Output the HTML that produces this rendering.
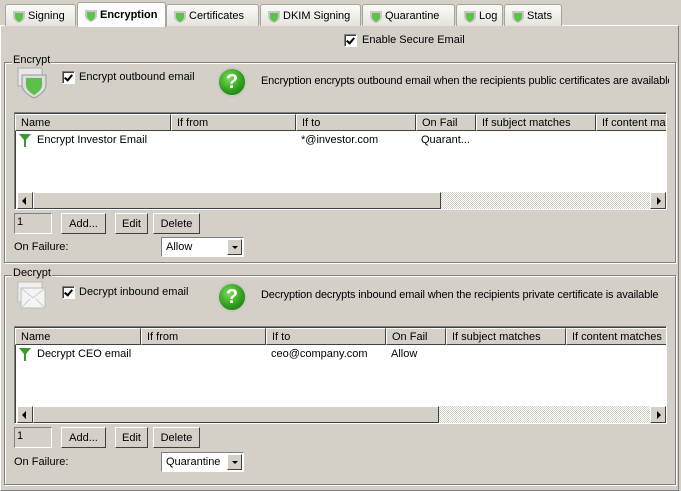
<!DOCTYPE html><html><head><style>
*{box-sizing:border-box;margin:0;padding:0}
body{width:681px;height:491px;background:#d4d0c8;font:11px "Liberation Sans",sans-serif;color:#000;position:relative;overflow:hidden}
.a{position:absolute}
.tab{position:absolute;top:4px;height:22px;border:1px solid #a8a49c;border-bottom:none;border-radius:3px 3px 0 0;background:linear-gradient(#fafaf8,#e6e3dc);padding:5px 0 0 22px;white-space:nowrap}
.tab .sh{position:absolute;left:6px;top:5px}
.sel{top:2px;height:25px;background:#fcfcfc;font-weight:bold;z-index:2;padding-top:6px}
.sel .sh{top:6px}
.panel{position:absolute;left:0;top:25px;width:679px;height:466px;border:1px solid #fff;border-right-color:#808080;border-bottom-color:#808080}
.grp{position:absolute;border:1px solid #808080;box-shadow:1px 1px 0 #fff inset,1px 1px 0 #fff}
.gl{position:absolute;background:#d4d0c8;padding:0 1px}
.cb{position:absolute;width:13px;height:13px;background:#fff;border:1px solid #808080;border-right-color:#fff;border-bottom-color:#fff;box-shadow:inset 1px 1px 0 #404040}
.cb:after{content:"";position:absolute;left:3px;top:1px;width:3px;height:6px;border:solid #000;border-width:0 2px 2px 0;transform:rotate(40deg)}
.list{position:absolute;left:14px;width:653px;height:98px;background:#fff;border:1px solid #808080;border-right-color:#fff;border-bottom-color:#fff;box-shadow:inset 1px 1px 0 #404040;overflow:hidden}
.hd{position:absolute;top:1px;height:17px;background:#d4d0c8;border:1px solid #fff;border-right-color:#404040;border-bottom-color:#404040;padding:2px 0 0 5px;white-space:nowrap;overflow:hidden}
.sb{position:absolute;left:2px;top:79px;width:649px;height:17px;background:repeating-conic-gradient(#d4d0c8 0 25%,#fff 0 50%) 0 0/2px 2px}
.btn3{position:absolute;height:17px;background:#d4d0c8;border:1px solid #fff;border-right-color:#404040;border-bottom-color:#404040}
.btn{position:absolute;height:21px;background:#d4d0c8;border:1px solid #fff;border-right-color:#404040;border-bottom-color:#404040;text-align:center;padding-top:4px}
.cnt{position:absolute;width:38px;height:21px;border:1px solid #808080;border-right-color:#fff;border-bottom-color:#fff;padding:2px 0 0 2px}
.sel2{position:absolute;left:161px;width:83px;height:20px;background:#fff;border:1px solid #808080;border-right-color:#fff;border-bottom-color:#fff;padding:3px 0 0 4px}
.sel2 i{position:absolute;right:1px;top:1px;width:15px;height:16px;background:#d4d0c8;border:1px solid #fff;border-right-color:#404040;border-bottom-color:#404040}
.sel2 i:after{content:"";position:absolute;left:4px;top:6px;border:3px solid transparent;border-top:3px solid #000}
.help{position:absolute;width:30px;height:30px;border-radius:50%;background:radial-gradient(circle at 40% 35%,#7fdc5a,#2a9a18 60%,#1d6e10);border:2px solid #c8c8c8;color:#fff;font:bold 20px "Liberation Sans",sans-serif;text-align:center;line-height:26px}
.funnel{position:absolute;left:4px;top:4px}
.clip{position:absolute;overflow:hidden;white-space:nowrap;letter-spacing:-0.15px}
</style></head><body>
<svg width="0" height="0" style="position:absolute"><defs>
<symbol id="sh" viewBox="0 0 14 14"><path d="M1 1h12v6c0 4-6 6-6 6s-6-2-6-6z" fill="#c8c8c8"/><path d="M3 3h8v4c0 3-4 5-4 5s-4-2-4-5z" fill="#5cc24a"/></symbol>
</defs></svg>
<div class="panel"></div>
<div class="tab" style="left:5px;width:71px"><svg class="sh" width="14" height="14"><use href="#sh"/></svg>Signing</div>
<div class="tab sel" style="left:77px;width:89px"><svg class="sh" width="14" height="14"><use href="#sh"/></svg>Encryption</div>
<div class="tab" style="left:166px;width:93px"><svg class="sh" width="14" height="14"><use href="#sh"/></svg>Certificates</div>
<div class="tab" style="left:260px;width:101px"><svg class="sh" width="14" height="14"><use href="#sh"/></svg>DKIM Signing</div>
<div class="tab" style="left:362px;width:93px"><svg class="sh" width="14" height="14"><use href="#sh"/></svg>Quarantine</div>
<div class="tab" style="left:456px;width:47px"><svg class="sh" width="14" height="14"><use href="#sh"/></svg>Log</div>
<div class="tab" style="left:504px;width:58px"><svg class="sh" width="14" height="14"><use href="#sh"/></svg>Stats</div>

<div class="cb" style="left:344px;top:34px"></div><div class="a" style="left:362px;top:34px">Enable Secure Email</div>

<!-- Encrypt -->
<div class="grp" style="left:4px;top:62px;width:672px;height:201px"></div>
<div class="gl" style="left:12px;top:54px">Encrypt</div>
<svg class="a" style="left:17px;top:67px" width="32" height="32"><rect x="1" y="1" width="24" height="18" fill="#e8e8e8" stroke="#aaa"/><path d="M5 8h24v10c0 8-12 13-12 13S5 26 5 18z" fill="#ddd" stroke="#999"/><path d="M9 11h16v7c0 6-8 10-8 10s-8-4-8-10z" fill="#5cbf4c"/></svg>
<div class="cb" style="left:62px;top:71px"></div><div class="a" style="left:79px;top:71px">Encrypt outbound email</div>
<div class="help" style="left:217px;top:67px">?</div>
<div class="clip" style="left:261px;top:75px;width:408px">Encryption encrypts outbound email when the recipients public certificates are available</div>
<div class="list" style="top:112px">
<div class="hd" style="left:0;width:156px">Name</div><div class="hd" style="left:156px;width:125px">If from</div><div class="hd" style="left:281px;width:120px">If to</div><div class="hd" style="left:401px;width:60px">On Fail</div><div class="hd" style="left:461px;width:120px">If subject matches</div><div class="hd" style="left:581px;width:80px">If content matches</div>
<svg class="funnel" style="top:21px" width="12" height="14"><path d="M0 0h12L7 6v7H5V6z" fill="#3a9a30"/></svg>
<div class="a" style="left:22px;top:21px">Encrypt Investor Email</div><div class="a" style="left:286px;top:21px">*@investor.com</div><div class="a" style="left:406px;top:21px">Quarant...</div>
<div class="sb"><div class="btn3" style="left:0;top:0;width:16px"><span style="position:absolute;left:4px;top:4px;border:4px solid transparent;border-right:4px solid #000;border-left:0"></span></div><div class="btn3" style="left:16px;top:0;width:408px"></div><div class="btn3" style="left:633px;top:0;width:16px"><span style="position:absolute;left:6px;top:4px;border:4px solid transparent;border-left:4px solid #000;border-right:0"></span></div></div>
</div>
<div class="cnt" style="left:14px;top:213px">1</div>
<div class="btn" style="left:61px;top:213px;width:45px">Add...</div>
<div class="btn" style="left:115px;top:213px;width:33px">Edit</div>
<div class="btn" style="left:153px;top:213px;width:47px">Delete</div>
<div class="a" style="left:14px;top:241px">On Failure:</div>
<div class="sel2" style="top:237px">Allow<i></i></div>

<!-- Decrypt -->
<div class="grp" style="left:4px;top:275px;width:672px;height:210px"></div>
<div class="gl" style="left:12px;top:267px">Decrypt</div>
<svg class="a" style="left:17px;top:281px" width="30" height="30"><rect x="1" y="1" width="24" height="20" fill="#f0f0f0" stroke="#bbb"/><rect x="4" y="7" width="24" height="20" fill="#f4f4f4" stroke="#bbb"/><path d="M4 7l12 10 12-10M4 27l9-9M28 27l-9-9" fill="none" stroke="#ccc"/></svg>
<div class="cb" style="left:62px;top:286px"></div><div class="a" style="left:79px;top:286px">Decrypt inbound email</div>
<div class="help" style="left:217px;top:282px">?</div>
<div class="clip" style="left:261px;top:289px;width:408px">Decryption decrypts inbound email when the recipients private certificate is available</div>
<div class="list" style="top:326px">
<div class="hd" style="left:0;width:126px">Name</div><div class="hd" style="left:126px;width:125px">If from</div><div class="hd" style="left:251px;width:120px">If to</div><div class="hd" style="left:371px;width:60px">On Fail</div><div class="hd" style="left:431px;width:120px">If subject matches</div><div class="hd" style="left:551px;width:110px">If content matches</div>
<svg class="funnel" style="top:21px" width="12" height="14"><path d="M0 0h12L7 6v7H5V6z" fill="#3a9a30"/></svg>
<div class="a" style="left:22px;top:21px">Decrypt CEO email</div><div class="a" style="left:256px;top:21px">ceo@company.com</div><div class="a" style="left:376px;top:21px">Allow</div>
<div class="sb"><div class="btn3" style="left:0;top:0;width:16px"><span style="position:absolute;left:4px;top:4px;border:4px solid transparent;border-right:4px solid #000;border-left:0"></span></div><div class="btn3" style="left:16px;top:0;width:406px"></div><div class="btn3" style="left:633px;top:0;width:16px"><span style="position:absolute;left:6px;top:4px;border:4px solid transparent;border-left:4px solid #000;border-right:0"></span></div></div>
</div>
<div class="cnt" style="left:14px;top:427px">1</div>
<div class="btn" style="left:61px;top:427px;width:45px">Add...</div>
<div class="btn" style="left:115px;top:427px;width:33px">Edit</div>
<div class="btn" style="left:153px;top:427px;width:47px">Delete</div>
<div class="a" style="left:14px;top:456px">On Failure:</div>
<div class="sel2" style="top:452px">Quarantine<i></i></div>
</body></html>
